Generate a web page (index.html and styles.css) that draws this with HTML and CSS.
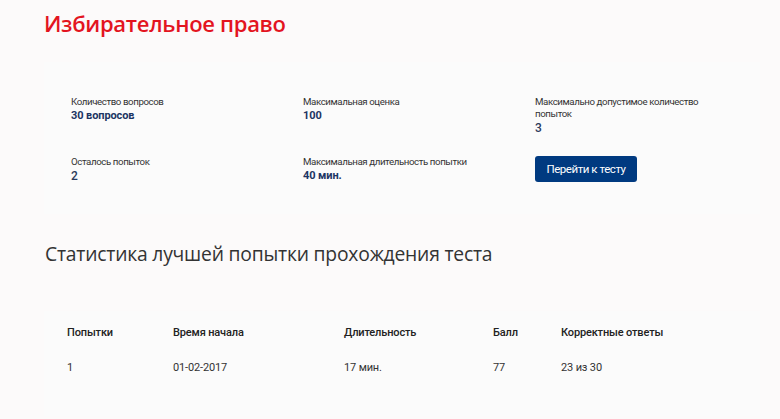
FILE: index.html
```html
<!DOCTYPE html>
<html lang="ru">
<head>
<meta charset="utf-8">
<title>Избирательное право</title>
<link rel="stylesheet" href="styles.css">
</head>
<body>
<div class="page">
  <h1 class="title">Избирательное право</h1>
  <section class="card info">
    <div class="item">
      <div class="label">Количество вопросов</div>
      <div class="value">30 вопросов</div>
    </div>
    <div class="item">
      <div class="label">Максимальная оценка</div>
      <div class="value">100</div>
    </div>
    <div class="item">
      <div class="label">Максимально допустимое количество попыток</div>
      <div class="value plain">3</div>
    </div>
    <div class="item">
      <div class="label">Осталось попыток</div>
      <div class="value plain">2</div>
    </div>
    <div class="item">
      <div class="label">Максимальная длительность попытки</div>
      <div class="value">40 мин.</div>
    </div>
    <div class="item">
      <button class="btn">Перейти к тесту</button>
    </div>
  </section>
  <h2 class="subtitle">Статистика лучшей попытки прохождения теста</h2>
  <section class="card stats">
    <div class="row head">
      <div class="c1">Попытки</div>
      <div class="c2">Время начала</div>
      <div class="c3">Длительность</div>
      <div class="c4">Балл</div>
      <div class="c5">Корректные ответы</div>
    </div>
    <div class="row">
      <div class="c1">1</div>
      <div class="c2">01-02-2017</div>
      <div class="c3">17 мин.</div>
      <div class="c4">77</div>
      <div class="c5">23 из 30</div>
    </div>
  </section>
</div>
</body>
</html>
```
FILE: styles.css
```css
* { box-sizing: border-box; }
html, body { margin: 0; padding: 0; }
body {
  background: #fcfafa;
  font-family: "Open Sans", "Noto Sans", sans-serif;
  color: #333;
  width: 780px;
  height: 419px;
  overflow: hidden;
}
.page {
  padding: 0 20px 0 44px;
}
.title {
  margin: 0;
  padding-top: 6px;
  font-size: 22px;
  line-height: 34px;
  font-weight: 600;
  color: #e3141f;
  letter-spacing: -0.3px;
}
.card {
  background: #fbfbfb;
}
.info {
  margin-top: 22px;
  padding: 34px 0 30px 27px;
  display: grid;
  grid-template-columns: 232px 232px 200px;
  row-gap: 20px;
  font-family: Roboto, "Open Sans", sans-serif;
}
.label {
  font-size: 9.7px;
  line-height: 12px;
  color: #333;
  letter-spacing: -0.4px;
}
.value {
  font-size: 11px;
  line-height: 16px;
  font-weight: 700;
  color: #1d3563;
  letter-spacing: -0.1px;
}
.value.plain { font-weight: 500; color: #2a3a5c; font-size: 12px; }
.btn {
  margin-top: 0;
  width: 102px;
  height: 26px;
  border: 0;
  border-radius: 3px;
  background: #003a80;
  color: #fff;
  font-family: Roboto, "Open Sans", sans-serif;
  font-size: 11.5px;
  letter-spacing: -0.45px;
  padding: 0;
}
.subtitle {
  margin: 27px 0 0 1px;
  font-size: 19.3px;
  line-height: 26px;
  font-weight: 400;
  color: #333;
  letter-spacing: -0.2px;
}
.stats {
  margin-top: 44px;
  padding: 14px 0 40px 23px;
  font-family: Roboto, "Open Sans", sans-serif;
}
.row {
  display: flex;
  font-size: 11px;
  line-height: 16px;
  color: #333;
  letter-spacing: -0.15px;
}
.row.head {
  font-weight: 500;
  color: #222;
  margin-bottom: 19px;
}
.c1 { width: 106px; }
.c2 { width: 171px; }
.c3 { width: 149px; }
.c4 { width: 68px; }
.c5 { width: 140px; }
```
